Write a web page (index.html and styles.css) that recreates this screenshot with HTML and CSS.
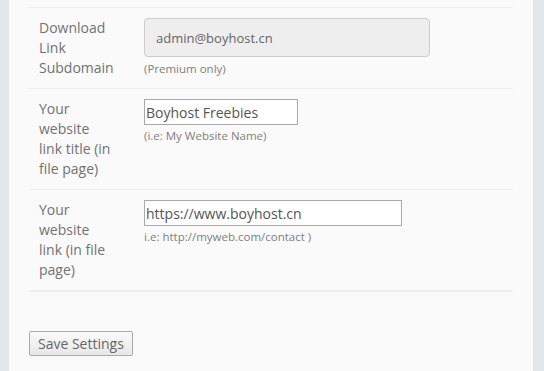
FILE: index.html
```html
<!DOCTYPE html>
<html lang="en">
<head>
    <meta charset="UTF-8">
    <meta name="viewport" content="width=device-width, initial-scale=1.0">
    <title>Settings</title>
    <link rel="stylesheet" href="styles.css">
</head>
<body>

<div class="panel">
    <!-- Settings form -->
    <form class="settings-form">
        <table class="form-table">
            <tbody>
                <tr>
                    <th>Download Link Subdomain</th>
                    <td>
                        <input type="text" class="input-disabled" value="admin@boyhost.cn" disabled>
                        <p class="description first">(Premium only)</p>
                    </td>
                </tr>
                <tr>
                    <th>Your website link title (in file page)</th>
                    <td>
                        <input type="text" class="input-short" value="Boyhost Freebies">
                        <p class="description">(i.e: My Website Name)</p>
                    </td>
                </tr>
                <tr class="last-row">
                    <th>Your website link (in file page)</th>
                    <td>
                        <input type="text" class="input-long" value="https://www.boyhost.cn">
                        <p class="description">i.e: http://myweb.com/contact )</p>
                    </td>
                </tr>
            </tbody>
        </table>

        <div class="actions">
            <button type="button" class="save-btn">Save Settings</button>
        </div>
    </form>
</div>

</body>
</html>
```

FILE: styles.css
```css
body {
    font-family: "Open Sans", Arial, sans-serif;
    margin: 0;
    padding: 0;
    background-color: #e4e7ea;
    color: #666;
}

.panel {
    margin-left: 9px;
    width: 484px;
    min-height: 371px;
    padding: 7px 20px 0 20px;
    background-color: #fafafa;
}

.form-table {
    width: 100%;
    border-collapse: collapse;
}

.form-table tr {
    border-top: 1px solid #eeeeee;
}

.form-table tr.last-row {
    border-bottom: 2px solid #eeeeee;
}

.form-table th {
    width: 75px;
    padding: 10px 20px 10px 10px;
    text-align: left;
    vertical-align: top;
    font-weight: normal;
    font-size: 14px;
    line-height: 20px;
    color: #727272;
}

.form-table td {
    padding: 10px 10px 10px 10px;
    vertical-align: top;
}

input {
    display: block;
    box-sizing: border-box;
    margin: 0;
    font-family: "Open Sans", Arial, sans-serif;
}

.input-disabled {
    width: 286px;
    height: 39px;
    padding: 0 11px;
    font-size: 13px;
    color: #666;
    background-color: #eeeeee;
    border: 1px solid #cccccc;
    border-radius: 4px;
}

.input-short,
.input-long {
    height: 26px;
    padding: 1px 1px;
    font-size: 14px;
    color: #555;
    background-color: #fff;
    border: 1px solid #aaaaaa;
    border-radius: 0;
}

.input-short {
    width: 154px;
}

.input-long {
    width: 258px;
}

.description {
    margin: 3px 0 0 0;
    font-size: 11.5px;
    line-height: 16px;
    color: #808080;
}

.description.first {
    margin-top: 4px;
}

.actions {
    padding-top: 39px;
}

.save-btn {
    height: 25px;
    padding: 0 8px;
    font-family: "Open Sans", Arial, sans-serif;
    font-size: 14px;
    color: #666;
    background: linear-gradient(#fafafa, #e8e8e8);
    border: 1px solid #aaaaaa;
    border-radius: 2px;
    cursor: pointer;
}
```
